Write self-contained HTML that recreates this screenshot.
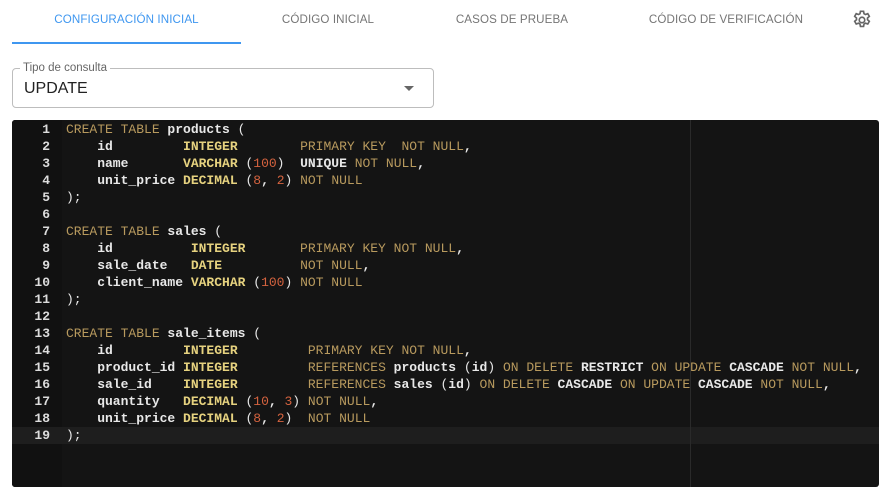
<!DOCTYPE html>
<html><head><meta charset="utf-8"><style>
body{margin:0;width:893px;height:501px;background:#fff;font-family:"Liberation Sans",sans-serif;position:relative;overflow:hidden}
.tab{position:absolute;top:13px;font-size:11.6px;color:#757575;text-align:center;letter-spacing:0.1px}
.ind{position:absolute;left:12px;top:42px;width:229px;height:2px;background:#3f97f0}
.sel{position:absolute;left:12px;top:68px;width:420px;height:38px;border:1px solid #bdbdbd;border-radius:4px}
.lbl{position:absolute;left:20px;top:62px;background:#fff;padding:0 3px;font-size:11.5px;color:#666}
.val{position:absolute;left:24px;top:80px;font-size:16px;color:#222}
.arr{position:absolute;left:404px;top:86px;width:0;height:0;border-left:5px solid transparent;border-right:5px solid transparent;border-top:5px solid #666}
.ed{position:absolute;left:12px;top:120px;width:867px;height:367px;background:#141414;border-radius:3px;overflow:hidden}
.gut{position:absolute;left:0;top:0;width:50px;height:367px;background:#111}
.act{position:absolute;left:0;top:307px;width:867px;height:17px;background:#1e1e1e}
.pm{position:absolute;left:678px;top:0;width:1px;height:367px;background:#2a2a2a}
pre{margin:0;position:absolute;top:1px;font-family:"Liberation Mono",monospace;font-size:13px;line-height:17px;color:#e8e8e8;font-weight:bold}
.nums{left:0;width:38px;text-align:right;color:#ddd}
.code{left:54px}
.k{color:#b89a5e;font-weight:normal}
.t{color:#e6d27f}
.n{color:#d5633f;font-weight:normal}
.p{font-weight:normal}
</style></head><body>
<div class="tab" style="left:12px;width:229px;color:#3f97f0">CONFIGURACIÓN INICIAL</div>
<div class="tab" style="left:228px;width:200px">CÓDIGO INICIAL</div>
<div class="tab" style="left:412px;width:200px">CASOS DE PRUEBA</div>
<div class="tab" style="left:626px;width:200px">CÓDIGO DE VERIFICACIÓN</div>
<svg style="position:absolute;left:851px;top:9px" width="22" height="22" viewBox="0 0 24 24"><path fill="none" stroke="#666" stroke-width="1.8" d="M10.3 2.5h3.4l.5 2.6 1.6.9 2.5-.9 1.7 2.9-2 1.8v1.9l2 1.7-1.7 3-2.5-.9-1.6.9-.5 2.6h-3.4l-.5-2.6-1.6-.9-2.5.9-1.7-3 2-1.7v-1.9l-2-1.8 1.7-2.9 2.5.9 1.6-.9z"/><circle cx="12" cy="12" r="3" fill="none" stroke="#666" stroke-width="1.8"/></svg>
<div class="ind"></div>
<div class="sel"></div><div class="lbl">Tipo de consulta</div><div class="val">UPDATE</div><div class="arr"></div>
<div class="ed"><div class="gut"></div><div class="act"></div><div class="pm"></div>
<pre class="nums">1
2
3
4
5
6
7
8
9
10
11
12
13
14
15
16
17
18
19</pre>
<pre class="code"><span class="k">CREATE TABLE</span> products <span class="p">(</span>
    id         <span class="t">INTEGER</span>        <span class="k">PRIMARY KEY  NOT NULL</span>,
    name       <span class="t">VARCHAR</span> <span class="p">(</span><span class="n">100</span><span class="p">)</span>  UNIQUE <span class="k">NOT NULL</span>,
    unit_price <span class="t">DECIMAL</span> <span class="p">(</span><span class="n">8</span>, <span class="n">2</span><span class="p">)</span> <span class="k">NOT NULL</span>
<span class="p">);</span>

<span class="k">CREATE TABLE</span> sales <span class="p">(</span>
    id          <span class="t">INTEGER</span>       <span class="k">PRIMARY KEY NOT NULL</span>,
    sale_date   <span class="t">DATE</span>          <span class="k">NOT NULL</span>,
    client_name <span class="t">VARCHAR</span> <span class="p">(</span><span class="n">100</span><span class="p">)</span> <span class="k">NOT NULL</span>
<span class="p">);</span>

<span class="k">CREATE TABLE</span> sale_items <span class="p">(</span>
    id         <span class="t">INTEGER</span>         <span class="k">PRIMARY KEY NOT NULL</span>,
    product_id <span class="t">INTEGER</span>         <span class="k">REFERENCES</span> products <span class="p">(</span>id<span class="p">)</span> <span class="k">ON DELETE</span> RESTRICT <span class="k">ON UPDATE</span> CASCADE <span class="k">NOT NULL</span>,
    sale_id    <span class="t">INTEGER</span>         <span class="k">REFERENCES</span> sales <span class="p">(</span>id<span class="p">)</span> <span class="k">ON DELETE</span> CASCADE <span class="k">ON UPDATE</span> CASCADE <span class="k">NOT NULL</span>,
    quantity   <span class="t">DECIMAL</span> <span class="p">(</span><span class="n">10</span>, <span class="n">3</span><span class="p">)</span> <span class="k">NOT NULL</span>,
    unit_price <span class="t">DECIMAL</span> <span class="p">(</span><span class="n">8</span>, <span class="n">2</span><span class="p">)</span>  <span class="k">NOT NULL</span>
<span class="p">);</span></pre>
</div>
</body></html>
